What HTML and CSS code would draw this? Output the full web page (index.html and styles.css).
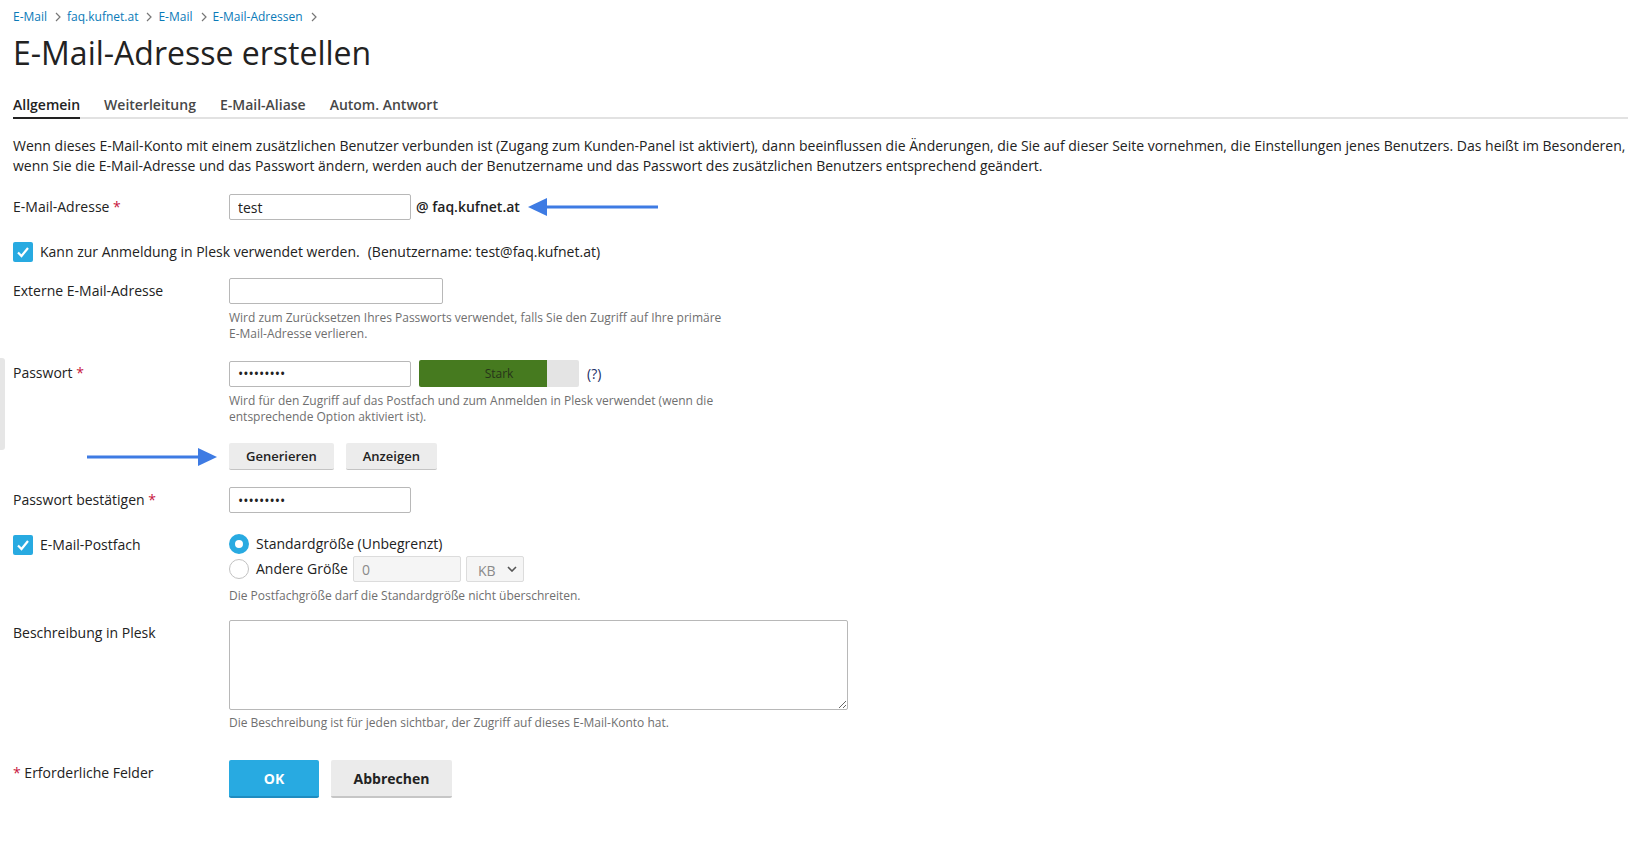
FILE: index.html
```html
<!DOCTYPE html>
<html lang="de">
<head>
  <meta charset="UTF-8">
  <title>E-Mail-Adresse erstellen</title>
  <link rel="stylesheet" href="styles.css">
</head>
<body>
  <nav class="breadcrumbs">
    <a href="#">E-Mail</a>
    <svg class="sep" viewBox="0 0 6 10"><path d="M1 1l4 4-4 4" fill="none" stroke="#777" stroke-width="1.2"/></svg>
    <a href="#">faq.kufnet.at</a>
    <svg class="sep" viewBox="0 0 6 10"><path d="M1 1l4 4-4 4" fill="none" stroke="#777" stroke-width="1.2"/></svg>
    <a href="#">E-Mail</a>
    <svg class="sep" viewBox="0 0 6 10"><path d="M1 1l4 4-4 4" fill="none" stroke="#777" stroke-width="1.2"/></svg>
    <a href="#">E-Mail-Adressen</a>
    <svg class="sep" viewBox="0 0 6 10"><path d="M1 1l4 4-4 4" fill="none" stroke="#777" stroke-width="1.2"/></svg>
  </nav>

  <h1>E-Mail-Adresse erstellen</h1>

  <ul class="tabs">
    <li class="active">Allgemein</li>
    <li>Weiterleitung</li>
    <li>E-Mail-Aliase</li>
    <li>Autom. Antwort</li>
  </ul>

  <p class="intro">Wenn dieses E-Mail-Konto mit einem zusätzlichen Benutzer verbunden ist (Zugang zum Kunden-Panel ist aktiviert), dann beeinflussen die Änderungen, die Sie auf dieser Seite vornehmen, die Einstellungen jenes Benutzers. Das heißt im Besonderen, wenn Sie die E-Mail-Adresse und das Passwort ändern, werden auch der Benutzername und das Passwort des zusätzlichen Benutzers entsprechend geändert.</p>

  <form class="form" onsubmit="return false">
    <!-- E-Mail-Adresse -->
    <div class="row">
      <label class="label">E-Mail-Adresse <span class="req">*</span></label>
      <div class="field">
        <div class="inline">
          <input class="input w-182" type="text" value="test">
          <span class="domain">@ faq.kufnet.at</span>
          <svg class="arrow" viewBox="0 0 130 20">
            <polygon points="0,10 19,1 19,19" fill="#3e7be3"/>
            <rect x="17" y="8.5" width="113" height="3" fill="#3e7be3"/>
          </svg>
        </div>
      </div>
    </div>

    <div class="check-row">
      <span class="checkbox"><svg viewBox="0 0 20 20"><path d="M5 10.5l3.5 3.5 6.5-8" fill="none" stroke="#fff" stroke-width="2.2"/></svg></span>
      <span>Kann zur Anmeldung in Plesk verwendet werden.</span>
      <span class="user-hint">(Benutzername: test@faq.kufnet.at)</span>
    </div>

    <div class="row row-external">
      <label class="label">Externe E-Mail-Adresse</label>
      <div class="field">
        <input class="input w-214" type="text">
        <div class="hint">Wird zum Zurücksetzen Ihres Passworts verwendet, falls Sie den Zugriff auf Ihre primäre E-Mail-Adresse verlieren.</div>
      </div>
    </div>

    <div class="row row-password">
      <label class="label">Passwort <span class="req">*</span></label>
      <div class="field">
        <div class="inline">
          <input class="input w-182" type="password" value="abcdefghi">
          <div class="strength">Stark</div>
          <a class="help" href="#">(?)</a>
        </div>
        <div class="hint">Wird für den Zugriff auf das Postfach und zum Anmelden in Plesk verwendet (wenn die entsprechende Option aktiviert ist).</div>
      </div>
    </div>

    <div class="row">
      <div class="label label-arrow">
        <svg class="arrow" viewBox="0 0 130 20">
          <rect x="0" y="8.5" width="113" height="3" fill="#3e7be3"/>
          <polygon points="130,10 111,1 111,19" fill="#3e7be3"/>
        </svg>
      </div>
      <div class="field">
        <div class="inline gap-12">
          <button class="btn" type="button">Generieren</button>
          <button class="btn" type="button">Anzeigen</button>
        </div>
      </div>
    </div>

    <div class="row row-confirm">
      <label class="label">Passwort bestätigen <span class="req">*</span></label>
      <div class="field">
        <input class="input w-182" type="password" value="abcdefghi">
      </div>
    </div>

    <div class="row row-mailbox">
      <div class="label label-check">
        <span class="checkbox"><svg viewBox="0 0 20 20"><path d="M5 10.5l3.5 3.5 6.5-8" fill="none" stroke="#fff" stroke-width="2.2"/></svg></span>
        <span>E-Mail-Postfach</span>
      </div>
      <div class="field">
        <div class="radio-line">
          <span class="radio checked"></span>
          <span>Standardgröße (Unbegrenzt)</span>
        </div>
        <div class="radio-line tall">
          <span class="radio"></span>
          <span>Andere Größe</span>
          <input class="input input-disabled w-108" type="text" value="0" disabled>
          <div class="select-disabled">
            <span>KB</span>
            <svg viewBox="0 0 10 6"><path d="M1 1l4 4 4-4" fill="none" stroke="#555" stroke-width="1.6"/></svg>
          </div>
        </div>
        <div class="hint">Die Postfachgröße darf die Standardgröße nicht überschreiten.</div>
      </div>
    </div>

    <div class="row row-description">
      <label class="label">Beschreibung in Plesk</label>
      <div class="field">
        <textarea class="textarea"></textarea>
        <div class="hint hint-tight">Die Beschreibung ist für jeden sichtbar, der Zugriff auf dieses E-Mail-Konto hat.</div>
      </div>
    </div>

    <div class="row row-actions">
      <div class="label"><span class="req">*</span> Erforderliche Felder</div>
      <div class="field">
        <div class="inline gap-12">
          <button class="btn-primary" type="submit">OK</button>
          <button class="btn-cancel" type="button">Abbrechen</button>
        </div>
      </div>
    </div>
  </form>
</body>
</html>
```

FILE: styles.css
```css
:root {
  --text: #222;
  --muted: #6f6f6f;
  --link: #0a7ab8;
  --blue: #28aae1;
  --req: #c7143d;
  --border: #b8b8b8;
}
body {
  margin: 0;
  padding: 8px 0 40px 13px;
  font-family: 'Open Sans', Arial, sans-serif;
  font-size: 14px;
  line-height: 20px;
  color: var(--text);
  background: #fff;
}
.breadcrumbs {
  display: flex;
  align-items: center;
  font-size: 12px;
  line-height: 18px;
}
.breadcrumbs a {
  color: var(--link);
  text-decoration: none;
}
.breadcrumbs .sep {
  width: 6px;
  height: 10px;
  margin: 0 6px 0 8px;
}
h1 {
  margin: 7px 0 0;
  font-size: 32px;
  line-height: 40px;
  font-weight: 400;
  color: var(--text);
}
.tabs {
  display: flex;
  gap: 24px;
  list-style: none;
  margin: 22px 0 0;
  padding: 0;
  border-bottom: 2px solid #e2e2e2;
}
.tabs li {
  font-weight: 600;
  color: #474747;
  padding-bottom: 2px;
  margin-bottom: -2px;
  border-bottom: 2px solid transparent;
}
.tabs li.active {
  color: var(--text);
  border-bottom-color: #222;
}
.intro {
  margin: 17px 0 0;
}

/* formulaire */
.form {
  margin: 0;
}
.row {
  display: grid;
  grid-template-columns: 216px 1fr;
  margin-top: 18px;
}
.row-external { margin-top: 16px; }
.row-password { margin-top: 18px; }
.row-confirm { margin-top: 17px; }
.row-mailbox { margin-top: 19px; }
.row-description { margin-top: 16px; }
.row-actions { margin-top: 29px; }
.label {
  line-height: 26px;
}
.req {
  color: var(--req);
}
.field {
  min-width: 0;
}
.inline {
  display: flex;
  align-items: center;
  gap: 8px;
}
.gap-12 {
  gap: 12px;
}
.input {
  box-sizing: border-box;
  height: 26px;
  border: 1px solid var(--border);
  border-radius: 2px;
  padding: 0 8px;
  font-family: 'Open Sans', Arial, sans-serif;
  font-size: 14px;
  color: var(--text);
  background: #fff;
  outline: none;
  display: block;
}
.w-182 { width: 182px; }
.w-214 { width: 214px; }
.w-108 { width: 108px; }
.domain {
  font-weight: 600;
  margin-left: -3px;
}
.arrow {
  width: 130px;
  height: 20px;
  display: block;
}
.hint {
  margin-top: 6px;
  max-width: 500px;
  font-size: 12px;
  line-height: 16px;
  color: var(--muted);
}
.hint-tight {
  margin-top: 5px;
}
.check-row {
  display: flex;
  align-items: center;
  gap: 7px;
  margin-top: 22px;
  line-height: 20px;
}
.user-hint {
  margin-left: 1px;
}
.checkbox {
  width: 20px;
  height: 20px;
  border-radius: 2px;
  background: var(--blue);
  display: inline-flex;
  flex: none;
}
.checkbox svg {
  width: 20px;
  height: 20px;
}
.strength {
  width: 160px;
  height: 27px;
  line-height: 27px;
  border-radius: 2px;
  background: linear-gradient(90deg, #467a1f 0, #467a1f 80%, #e4e4e4 80%);
  text-align: center;
  font-size: 12px;
  color: #26341a;
}
.help {
  color: #1c2f66;
  text-decoration: none;
  font-size: 14px;
}
.row-password {
  position: relative;
}
.row-password::before {
  content: "";
  position: absolute;
  left: -13px;
  top: -2px;
  width: 5px;
  height: 92px;
  background: #e6e6e6;
  border-radius: 0 3px 3px 0;
}
.label-arrow {
  display: flex;
  align-items: center;
  justify-content: flex-end;
  padding-right: 12px;
}
.btn {
  height: 27px;
  padding: 0 17px;
  border: none;
  border-bottom: 1px solid #c4c4c4;
  border-radius: 2px;
  background: #ececec;
  font-family: 'Open Sans', Arial, sans-serif;
  font-size: 13px;
  font-weight: 600;
  color: var(--text);
  cursor: pointer;
}
.label-check {
  display: flex;
  align-items: center;
  gap: 7px;
  height: 26px;
}
.radio-line {
  display: flex;
  align-items: center;
  gap: 7px;
  height: 24px;
}
.radio-line.tall {
  height: 26px;
}
.radio-line .input {
  margin-left: -2px;
}
.radio {
  box-sizing: border-box;
  width: 20px;
  height: 20px;
  border-radius: 50%;
  border: 1px solid #c2c2c2;
  background: #fff;
  flex: none;
}
.radio.checked {
  border: 6px solid var(--blue);
}
.input-disabled {
  background: #f5f5f5;
  border-color: #dcdcdc;
  color: #8a8a8a;
}
.select-disabled {
  box-sizing: border-box;
  width: 58px;
  height: 26px;
  margin-left: -2px;
  border: 1px solid #dcdcdc;
  border-radius: 2px;
  background: #f5f5f5;
  display: flex;
  align-items: center;
  justify-content: space-between;
  padding: 0 6px 0 11px;
  color: #8a8a8a;
}
.select-disabled span {
  padding-top: 3px;
}
.select-disabled svg {
  width: 10px;
  height: 6px;
}
.textarea {
  box-sizing: border-box;
  display: block;
  width: 619px;
  height: 90px;
  border: 1px solid var(--border);
  border-radius: 2px;
  font-family: 'Open Sans', Arial, sans-serif;
  font-size: 14px;
  margin: 0;
}
.btn-primary, .btn-cancel {
  height: 38px;
  border: none;
  border-radius: 2px;
  font-family: 'Open Sans', Arial, sans-serif;
  font-size: 14px;
  font-weight: 700;
  cursor: pointer;
}
.btn-primary {
  width: 90px;
  background: var(--blue);
  border-bottom: 2px solid #1f8cc0;
  color: #fff;
}
.btn-cancel {
  width: 121px;
  background: #ebebeb;
  border-bottom: 2px solid #c6c6c6;
  color: var(--text);
}
```
